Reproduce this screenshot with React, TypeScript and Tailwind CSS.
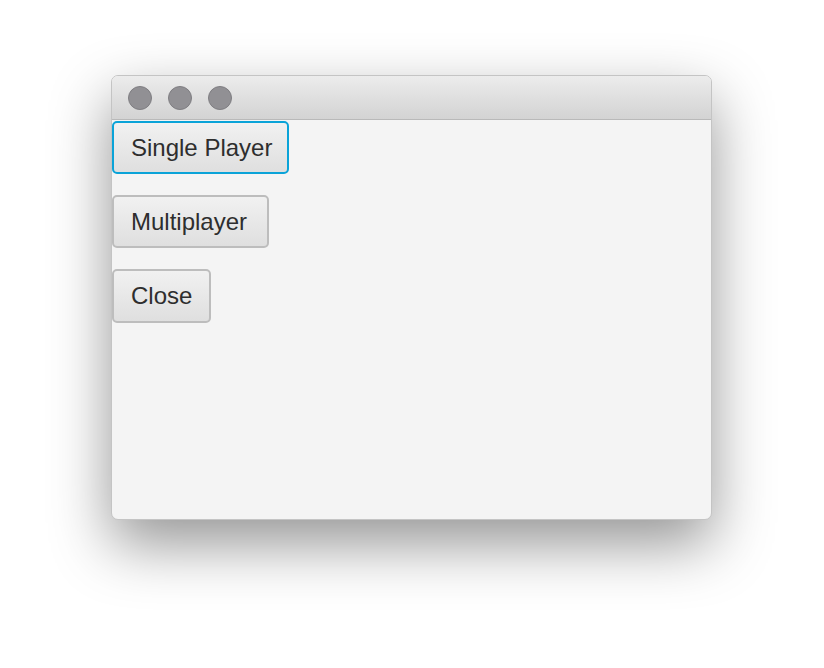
export default function App() {
  const dots = [0, 1, 2];
  return (
    <div className="w-[824px] h-[668px] bg-white pl-[111px] pt-[75px] overflow-hidden" style={{ fontFamily: '"Liberation Sans", Arial, sans-serif' }}>
      <div className="w-[601px] h-[445px] rounded-[7px] border border-[#c4c4c4] bg-[#f4f4f4] overflow-hidden flex flex-col shadow-[0_24px_60px_rgba(0,0,0,0.42)]">
        <div className="h-[44px] shrink-0 flex items-center gap-4 pl-[16px] border-b border-[#b9b9b9] bg-gradient-to-b from-[#ececec] to-[#d3d3d3]">
          {dots.map((d) => (
            <div key={d} className="w-[24px] h-[24px] rounded-full bg-[#919094] border border-[#7f7e82]" />
          ))}
        </div>
        <div className="flex flex-col items-start gap-[21px] pt-[1px]">
          <button className="w-[177px] h-[53px] pl-[17px] text-left rounded-[5px] border-2 border-[#0aa3d8] bg-gradient-to-b from-[#f1f1f1] to-[#dfdfdf] text-[24px] text-[#2e2e2e] leading-none">
            Single Player
          </button>
          <button className="w-[157px] h-[53px] pl-[17px] text-left rounded-[5px] border-2 border-[#bdbdbd] bg-gradient-to-b from-[#f1f1f1] to-[#dfdfdf] text-[24px] text-[#2e2e2e] leading-none">
            Multiplayer
          </button>
          <button className="w-[99px] h-[54px] pl-[17px] text-left rounded-[5px] border-2 border-[#bdbdbd] bg-gradient-to-b from-[#f1f1f1] to-[#dfdfdf] text-[24px] text-[#2e2e2e] leading-none">
            Close
          </button>
        </div>
      </div>
    </div>
  );
}
